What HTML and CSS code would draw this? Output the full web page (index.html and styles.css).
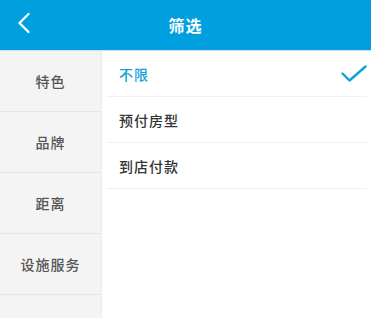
FILE: index.html
```html
<!DOCTYPE html>
<html lang="zh">
<head>
<meta charset="utf-8">
<link rel="stylesheet" href="styles.css">
</head>
<body>
<div class="header">
  <div class="back">
    <svg width="14" height="22" viewBox="0 0 14 22"><path d="M11.5 2 L2.5 11 L11.5 20" fill="none" stroke="#fff" stroke-width="2.2" stroke-linecap="round" stroke-linejoin="round"/></svg>
  </div>
  <div class="title">筛选</div>
</div>
<div class="body">
  <div class="side">
    <div class="side-item">特色</div>
    <div class="side-item">品牌</div>
    <div class="side-item">距离</div>
    <div class="side-item">设施服务</div>
    <div class="side-item"></div>
  </div>
  <div class="main">
    <div class="row active">不限
      <svg class="check" width="26" height="18" viewBox="0 0 26 18"><path d="M1.5 8.5 L8.5 15.5 L24.5 1.5" fill="none" stroke="#139fdc" stroke-width="2.4" stroke-linecap="round" stroke-linejoin="round"/></svg>
    </div>
    <div class="row">预付房型</div>
    <div class="row">到店付款</div>
  </div>
</div>
</body>
</html>
```
FILE: styles.css
```css
* { box-sizing: border-box; }
html, body { margin: 0; padding: 0; }
body {
  width: 371px;
  height: 318px;
  overflow: hidden;
  font-family: "Noto Sans CJK SC", "Noto Sans", sans-serif;
  background: #fff;
}
.header {
  height: 50px;
  background: #00a0e0;
  display: flex;
  align-items: center;
  justify-content: center;
  position: relative;
}
.back {
  position: absolute;
  left: 17px;
  top: 12px;
  width: 14px;
  height: 22px;
  display: flex;
}
.title {
  color: #fff;
  font-size: 16px;
  font-weight: bold;
  letter-spacing: 1px;
}
.body {
  display: flex;
  height: 268px;
  border-top: 1px solid #c8e4f2;
  overflow: hidden;
}
.side {
  width: 102px;
  background: #f4f4f4;
  border-right: 1px solid #ececec;
  display: flex;
  flex-direction: column;
  overflow: hidden;
}
.side-item {
  height: 61px;
  flex: none;
  display: flex;
  align-items: center;
  justify-content: center;
  font-size: 14px;
  font-weight: 500;
  color: #555;
  border-bottom: 1px solid #e6e6e6;
  letter-spacing: 1px;
}
.main {
  flex: 1;
  padding-left: 5px;
  padding-right: 4px;
}
.row {
  height: 46px;
  display: flex;
  align-items: center;
  justify-content: space-between;
  padding-left: 12px;
  font-size: 14px;
  font-weight: 500;
  color: #333;
  border-bottom: 1px solid #f0f0f0;
  letter-spacing: 1px;
}
.row.active { color: #139fdc; }
```
